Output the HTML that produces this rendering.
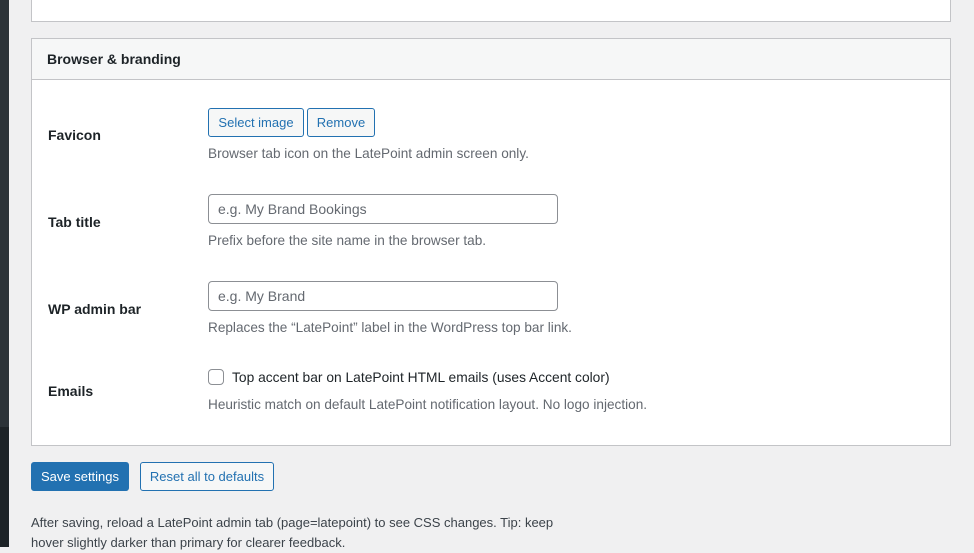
<!DOCTYPE html>
<html><head><style>
body{margin:0;width:974px;height:547px;overflow:hidden;background:#f0f0f1;font-family:"Liberation Sans",sans-serif;color:#1d2327;position:relative}
.side{position:absolute;left:0;top:0;width:9px;height:427px;background:#2c3338}
.side2{position:absolute;left:0;top:427px;width:9px;height:120px;background:#1d2327}
.card{position:absolute;left:31px;width:918px;background:#fff;border:1px solid #c3c4c7}
.hdr{height:40px;background:#f6f7f7;border-bottom:1px solid #c3c4c7;font-weight:bold;font-size:14px;line-height:40px;padding-left:15px}
.a{position:absolute;font-size:14px}
.lbl{position:absolute;left:48px;font-weight:bold;font-size:14px}
.desc{position:absolute;left:208px;font-size:13.6px;color:#646970}
.btn{position:absolute;height:27px;border:1px solid #2271b1;border-radius:3px;background:#f6f7f7;color:#2271b1;font-size:13px;line-height:27px;text-align:center;box-sizing:content-box}
.inp{position:absolute;left:208px;width:350px;height:28px;border:1px solid #8c8f94;border-radius:4px;background:#fff;font-size:14px;color:#646970;line-height:28px;padding-left:9px;box-sizing:border-box}
</style></head><body>
<div class="side"></div><div class="side2"></div>
<div class="card" style="top:-5px;height:25px"></div>
<div class="card" style="top:38px;height:406px"><div class="hdr">Browser &amp; branding</div></div>
<div class="lbl" style="top:127px">Favicon</div>
<div class="btn" style="left:208px;top:108px;width:94px">Select image</div>
<div class="btn" style="left:307px;top:108px;width:66px">Remove</div>
<div class="desc" style="top:146px">Browser tab icon on the LatePoint admin screen only.</div>
<div class="lbl" style="top:214px">Tab title</div>
<div class="inp" style="top:194px;height:30px">e.g. My Brand Bookings</div>
<div class="desc" style="top:233px">Prefix before the site name in the browser tab.</div>
<div class="lbl" style="top:301px">WP admin bar</div>
<div class="inp" style="top:281px;height:30px">e.g. My Brand</div>
<div class="desc" style="top:320px">Replaces the “LatePoint” label in the WordPress top bar link.</div>
<div class="lbl" style="top:383px">Emails</div>
<div style="position:absolute;left:208px;top:369px;width:14px;height:14px;border:1px solid #8c8f94;border-radius:4px;background:#fff"></div>
<div class="a" style="left:232px;top:370px;font-size:13.8px">Top accent bar on LatePoint HTML emails (uses Accent color)</div>
<div class="desc" style="top:397px">Heuristic match on default LatePoint notification layout. No logo injection.</div>
<div class="btn" style="left:31px;top:462px;width:96px;background:#2271b1;color:#fff">Save settings</div>
<div class="btn" style="left:140px;top:462px;width:132px">Reset all to defaults</div>
<div class="a" style="left:31px;top:513px;font-size:13px;color:#3c434a;width:560px;line-height:20px">After saving, reload a LatePoint admin tab (page=latepoint) to see CSS changes. Tip: keep<br>hover slightly darker than primary for clearer feedback.</div>
</body></html>
